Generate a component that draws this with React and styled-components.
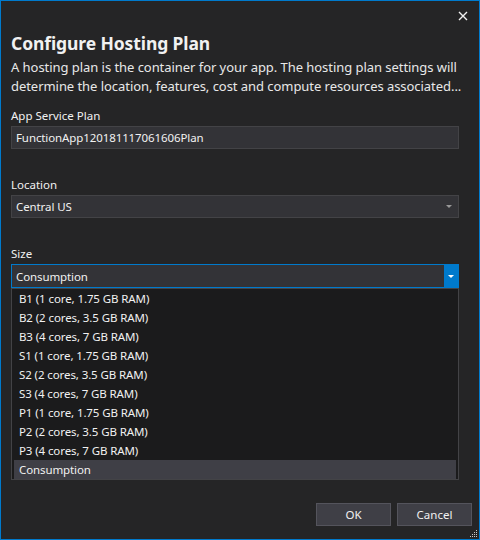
import styled, { createGlobalStyle } from 'styled-components';

const GlobalStyle = createGlobalStyle`
  html, body {
    margin: 0;
    padding: 0;
    background: #252526;
  }
  body {
    font-family: "Noto Sans", "Open Sans", sans-serif;
    color: #f1f1f1;
  }
`;

const Dialog = styled.div`
  box-sizing: border-box;
  width: 480px;
  height: 540px;
  border: 1px solid #007acc;
  background: #252526;
  display: flex;
  flex-direction: column;
  position: relative;
`;

const TitleBar = styled.div`
  height: 28px;
  display: flex;
  justify-content: flex-end;
  align-items: center;
  padding-right: 8px;
`;

const CloseButton = styled.button`
  width: 16px;
  height: 16px;
  padding: 0;
  border: none;
  background: transparent;
  display: flex;
  align-items: center;
  justify-content: center;
  margin-top: 2px;
`;

const Body = styled.div`
  flex: 1;
  display: flex;
  flex-direction: column;
  padding: 0 20px 0 10px;
`;

const Title = styled.h1`
  margin: 2px 0 0;
  font-size: 17.5px;
  font-weight: 700;
  letter-spacing: -0.1px;
  line-height: 24px;
  color: #f1f1f1;
`;

const Description = styled.p`
  margin: 3px 0 0;
  font-size: 13px;
  letter-spacing: -0.05px;
  line-height: 19px;
  white-space: nowrap;
  color: #e8e8e8;
`;

const Field = styled.div`
  display: flex;
  flex-direction: column;
  margin-top: ${(p) => p.$gap}px;
`;

const Label = styled.label`
  font-size: 11.5px;
  line-height: 16px;
  color: #f1f1f1;
  margin-bottom: 2px;
`;

const Box = styled.div`
  box-sizing: border-box;
  height: ${(p) => (p.$open ? 24 : 23)}px;
  display: flex;
  align-items: center;
  background: #333337;
  border: 1px solid ${(p) => (p.$open ? '#007acc' : '#434346')};
  font-size: 11.5px;
  letter-spacing: -0.1px;
  color: #f1f1f1;
`;

const BoxText = styled.span`
  flex: 1;
  padding-left: 4px;
`;

const ArrowCell = styled.span`
  width: ${(p) => (p.$open ? 14 : 16)}px;
  align-self: stretch;
  display: flex;
  align-items: center;
  justify-content: center;
  background: ${(p) => (p.$open ? '#007acc' : 'transparent')};
  margin-right: ${(p) => (p.$open ? 0 : 1)}px;
`;

const Arrow = styled.span`
  width: 0;
  height: 0;
  border-left: 3px solid transparent;
  border-right: 3px solid transparent;
  border-top: 3px solid ${(p) => (p.$open ? '#ffffff' : '#999999')};
`;

const List = styled.ul`
  box-sizing: border-box;
  list-style: none;
  margin: 0;
  padding: 0 2px;
  background: #1b1b1c;
  border: 1px solid #434346;
  height: 192px;
`;

const Option = styled.li`
  height: 19px;
  line-height: 19px;
  padding-left: 5px;
  font-size: 11.5px;
  letter-spacing: -0.1px;
  color: #f1f1f1;
  background: ${(p) => (p.$selected ? '#3f3f46' : 'transparent')};
`;

const Footer = styled.div`
  display: flex;
  justify-content: flex-end;
  gap: 6px;
  padding: 0 7px 13px 0;
  margin-top: auto;
`;

const Button = styled.button`
  box-sizing: border-box;
  width: 75px;
  height: 23px;
  background: #3f3f46;
  border: 1px solid #54545c;
  color: #f1f1f1;
  font-family: inherit;
  font-size: 11.5px;
  padding: 0;
`;

const Grip = styled.svg`
  position: absolute;
  right: 1px;
  bottom: 1px;
`;

const sizes = [
  'B1 (1 core, 1.75 GB RAM)',
  'B2 (2 cores, 3.5 GB RAM)',
  'B3 (4 cores, 7 GB RAM)',
  'S1 (1 core, 1.75 GB RAM)',
  'S2 (2 cores, 3.5 GB RAM)',
  'S3 (4 cores, 7 GB RAM)',
  'P1 (1 core, 1.75 GB RAM)',
  'P2 (2 cores, 3.5 GB RAM)',
  'P3 (4 cores, 7 GB RAM)',
  'Consumption',
];

export default function App() {
  return (
    <>
      <GlobalStyle />
      <Dialog>
        <TitleBar>
          <CloseButton aria-label="Close">
            <svg width="10" height="10" viewBox="0 0 10 10">
              <path d="M1 1L9 9M9 1L1 9" stroke="#f1f1f1" strokeWidth="1.4" />
            </svg>
          </CloseButton>
        </TitleBar>
        <Body>
          <Title>Configure Hosting Plan</Title>
          <Description>
            A hosting plan is the container for your app. The hosting plan settings will
            <br />
            determine the location, features, cost and compute resources associated...
          </Description>

          <Field $gap={12}>
            <Label>App Service Plan</Label>
            <Box>
              <BoxText>FunctionApp120181117061606Plan</BoxText>
            </Box>
          </Field>

          <Field $gap={28}>
            <Label>Location</Label>
            <Box>
              <BoxText>Central US</BoxText>
              <ArrowCell>
                <Arrow />
              </ArrowCell>
            </Box>
          </Field>

          <Field $gap={28}>
            <Label>Size</Label>
            <Box $open>
              <BoxText>Consumption</BoxText>
              <ArrowCell $open>
                <Arrow $open />
              </ArrowCell>
            </Box>
            <List>
              {sizes.map((s) => (
                <Option key={s} $selected={s === 'Consumption'}>
                  {s}
                </Option>
              ))}
            </List>
          </Field>
        </Body>
        <Footer>
          <Button>OK</Button>
          <Button>Cancel</Button>
        </Footer>
        <Grip width="8" height="8" viewBox="0 0 8 8">
          {[
            [6, 0], [6, 2], [4, 2], [6, 4], [4, 4], [2, 4],
            [6, 6], [4, 6], [2, 6], [0, 6],
          ].map(([x, y]) => (
            <rect key={`${x}-${y}`} x={x} y={y} width="1" height="1" fill="#c8c8c8" />
          ))}
        </Grip>
      </Dialog>
    </>
  );
}
